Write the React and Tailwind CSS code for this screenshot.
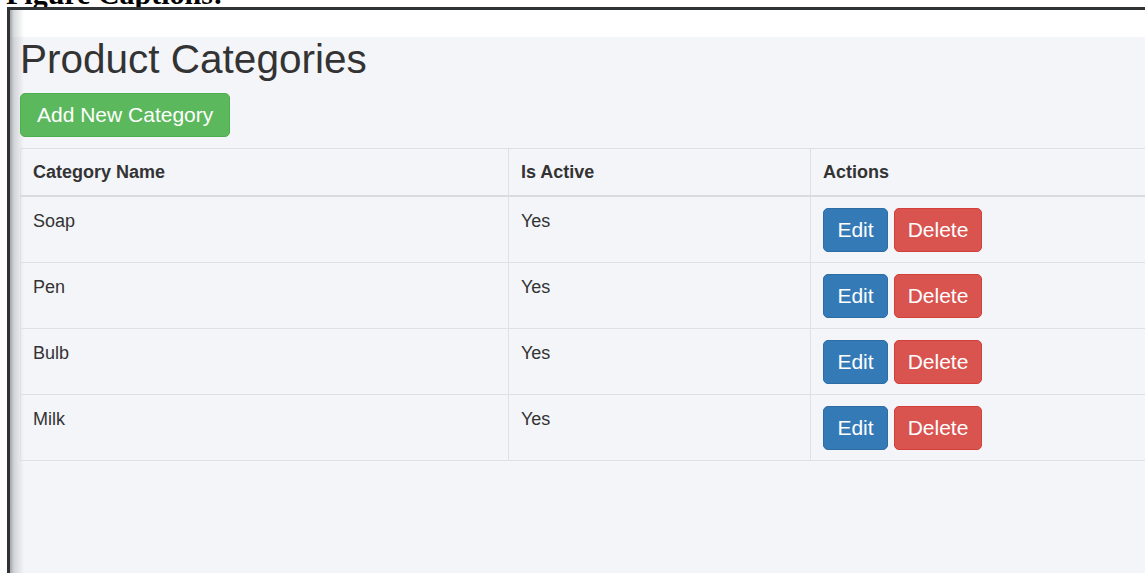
import React from "react";

const categories = [
    { name: "Soap", active: true },
    { name: "Pen", active: true },
    { name: "Bulb", active: true },
    { name: "Milk", active: true },
];

const ProductCategories = () => {
    return (
        <div className="h-[573px] overflow-hidden bg-white font-['Liberation_Sans',Arial,sans-serif] text-[#333]">
            {/* document caption, mostly scrolled off the top */}
            <div className="h-[7px] overflow-hidden">
                <p className="mt-[-21px] pl-[6px] font-['Liberation_Serif',serif] text-[30px] font-bold leading-none text-black whitespace-nowrap">
                    Figure Captions:
                </p>
            </div>

            <div className="pl-[7px] h-full">
                <div className="h-full border-l-[3px] border-t-[3px] border-[#2f3336]">
                    {/* edge shading runs down the left of both bands */}
                    <div className="h-[27px] bg-[linear-gradient(to_right,#a3a5a8_0px,#d8dadc_4px,#ffffff_14px)]" />

                    <div className="h-full bg-[linear-gradient(to_right,#a3a5a8_0px,#d2d4d8_4px,#f4f5f9_14px)] pl-[10px]">
                        <h1 className="text-[40.5px] leading-[44px] font-normal text-[#333]">Product Categories</h1>

                        <button className="mt-[12px] h-[44px] px-[16px] rounded-[5px] border border-[#4cae4c] bg-[#5cb85c] text-[21px] text-white">
                            Add New Category
                        </button>

                        <table className="mt-[11px] w-[1140px] table-fixed border-collapse text-[18px] leading-[26px]">
                            <colgroup>
                                <col className="w-[488px]" />
                                <col className="w-[302px]" />
                                <col />
                            </colgroup>
                            <thead>
                                <tr>
                                    {["Category Name", "Is Active", "Actions"].map((h) => (
                                        <th
                                            key={h}
                                            className="border border-[#dfe0e4] border-b-2 border-b-[#dadbdf] px-[12px] pt-[10px] pb-[10px] text-left font-bold"
                                        >
                                            {h}
                                        </th>
                                    ))}
                                </tr>
                            </thead>
                            <tbody>
                                {categories.map((c) => (
                                    <tr key={c.name}>
                                        <td className="border border-[#dfe0e4] px-[12px] pt-[11px] pb-[10px] align-top">{c.name}</td>
                                        <td className="border border-[#dfe0e4] px-[12px] pt-[11px] pb-[10px] align-top">
                                            {c.active ? "Yes" : "No"}
                                        </td>
                                        <td className="border border-[#dfe0e4] px-[12px] pt-[11px] pb-[10px] align-top">
                                            <div className="flex gap-[6px]">
                                                <button className="h-[44px] w-[65px] rounded-[5px] border border-[#2e6da4] bg-[#337ab7] text-[21px] text-white">
                                                    Edit
                                                </button>
                                                <button className="h-[44px] w-[88px] rounded-[5px] border border-[#d43f3a] bg-[#d9534f] text-[21px] text-white">
                                                    Delete
                                                </button>
                                            </div>
                                        </td>
                                    </tr>
                                ))}
                            </tbody>
                        </table>
                    </div>
                </div>
            </div>
        </div>
    );
};

export default ProductCategories;
